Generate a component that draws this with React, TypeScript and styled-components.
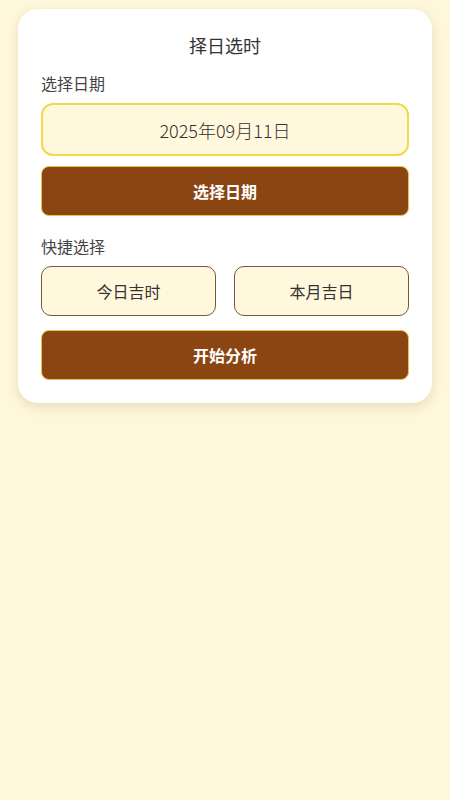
import React from "react";
import styled, { createGlobalStyle } from "styled-components";

const Global = createGlobalStyle`
  html, body {
    margin: 0;
    padding: 0;
    background: #FFF7DC;
    font-family: "Noto Sans CJK SC", "Noto Sans", sans-serif;
  }
  * { box-sizing: border-box; }
`;

const Page = styled.div`
  min-height: 800px;
  background: #FFF7DC;
  padding: 9px 18px;
`;

const Card = styled.div`
  background: #ffffff;
  border-radius: 20px;
  box-shadow: 0 4px 12px rgba(120, 100, 40, 0.18);
  padding: 24px 23px 23px 23px;
  display: flex;
  flex-direction: column;
`;

const Title = styled.div`
  font-size: 18px;
  line-height: 25px;
  text-align: center;
  color: #333333;
  margin-bottom: 14px;
`;

const Label = styled.div<{ $top?: number }>`
  font-size: 16px;
  line-height: 22px;
  color: #444444;
  margin-top: ${(p) => p.$top ?? 0}px;
  margin-bottom: 9px;
`;

const DateBox = styled.div`
  height: 53px;
  border: 2px solid #EFDB4A;
  border-radius: 12px;
  background: #FFF8DC;
  display: flex;
  align-items: center;
  justify-content: center;
  font-size: 18px;
  font-weight: 300;
  color: #333333;
`;

const PrimaryButton = styled.button<{ $top: number }>`
  height: 50px;
  margin-top: ${(p) => p.$top}px;
  background: #8B4513;
  border: 1px solid #E8C44A;
  border-radius: 8px;
  color: #ffffff;
  font-family: inherit;
  font-size: 16px;
  font-weight: 700;
  display: flex;
  align-items: center;
  justify-content: center;
  padding: 0;
`;

const QuickRow = styled.div`
  display: grid;
  grid-template-columns: 1fr 1fr;
  column-gap: 18px;
`;

const QuickButton = styled.button`
  height: 50px;
  background: #FFF8DC;
  border: 1px solid #76583A;
  border-radius: 10px;
  color: #333333;
  font-family: inherit;
  font-size: 16px;
  display: flex;
  align-items: center;
  justify-content: center;
  padding: 0;
`;

export default function App() {
  return (
    <>
      <Global />
      <Page>
        <Card>
          <Title>择日选时</Title>
          <Label>选择日期</Label>
          <DateBox>2025年09月11日</DateBox>
          <PrimaryButton $top={10}>选择日期</PrimaryButton>
          <Label $top={19}>快捷选择</Label>
          <QuickRow>
            <QuickButton>今日吉时</QuickButton>
            <QuickButton>本月吉日</QuickButton>
          </QuickRow>
          <PrimaryButton $top={14}>开始分析</PrimaryButton>
        </Card>
      </Page>
    </>
  );
}
